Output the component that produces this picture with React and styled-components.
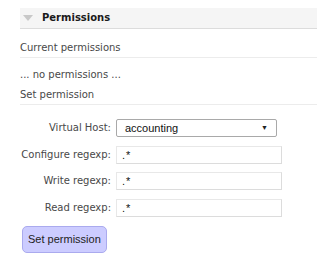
import React from 'react'
import styled, { createGlobalStyle } from 'styled-components'

const GlobalStyle = createGlobalStyle`
    body {
        margin: 0;
        background: #fff;
        font-family: Verdana, "DejaVu Sans", sans-serif;
        font-size: 10px;
        line-height: 14px;
        color: #484848;
    }
`

const Section = styled.div`
    padding: 8px 0 0 20px;
`

const Header = styled.div`
    display: flex;
    align-items: center;
    gap: 9px;
    height: 20px;
    padding-left: 3px;
    background: #f5f5f5;
    border-bottom: 1px solid #dcdcdc;
`

const Arrow = styled.span`
    width: 0;
    height: 0;
    border-left: 5px solid transparent;
    border-right: 5px solid transparent;
    border-top: 6px solid #c8c8c8;
`

const HeaderTitle = styled.span`
    font-weight: bold;
    font-size: 10px;
    color: #1a1a1a;
`

const Body = styled.div`
    padding-top: 12px;
`

const SubHeading = styled.div`
    padding-bottom: 2px;
    border-bottom: 1px solid #ececec;
`

const Note = styled.p`
    margin: 10px 0 6px;
`

const Form = styled.div`
    display: grid;
    grid-template-columns: 91px auto;
    column-gap: 5px;
    row-gap: 8.5px;
    align-items: center;
    margin-top: 14px;
`

const Label = styled.label`
    text-align: right;
    white-space: nowrap;
`

const Select = styled.div`
    display: flex;
    align-items: center;
    justify-content: space-between;
    width: 161px;
    height: 18px;
    box-sizing: border-box;
    padding: 0 8px 0 8px;
    border: 1px solid #a9a9a9;
    border-radius: 2px;
    font-family: "Liberation Sans", Arial, sans-serif;
    font-size: 11px;
    color: #111;
`

const Caret = styled.span`
    font-size: 7px;
    color: #222;
`

const Input = styled.input`
    width: 166px;
    height: 18px;
    box-sizing: border-box;
    margin: 0;
    padding: 0 5px;
    border: 1px solid #dcdcdc;
    border-top-color: #e8e8e8;
    border-left-color: #e8e8e8;
    font-family: "Liberation Sans", Arial, sans-serif;
    font-size: 11px;
    letter-spacing: 1px;
    color: #111;
    outline: none;
`

const Button = styled.button`
    display: block;
    margin: 9px 0 0 2px;
    height: 27px;
    padding: 0 5px;
    background: #ccccff;
    border: 1px solid #aaaaee;
    border-radius: 5px;
    font-family: "Liberation Sans", Arial, sans-serif;
    font-size: 11px;
    color: #222;
    cursor: pointer;
`

const fields = ['Configure regexp:', 'Write regexp:', 'Read regexp:']

const App = () => {
  return (
    <>
      <GlobalStyle />
      <Section>
        <Header>
          <Arrow />
          <HeaderTitle>Permissions</HeaderTitle>
        </Header>
        <Body>
          <SubHeading>Current permissions</SubHeading>
          <Note>... no permissions ...</Note>
          <SubHeading>Set permission</SubHeading>
          <Form>
            <Label>Virtual Host:</Label>
            <Select>
              <span>accounting</span>
              <Caret>▼</Caret>
            </Select>
            {fields.map((f) => (
              <React.Fragment key={f}>
                <Label>{f}</Label>
                <Input defaultValue=".*" />
              </React.Fragment>
            ))}
          </Form>
          <Button>Set permission</Button>
        </Body>
      </Section>
    </>
  )
}

export default App
